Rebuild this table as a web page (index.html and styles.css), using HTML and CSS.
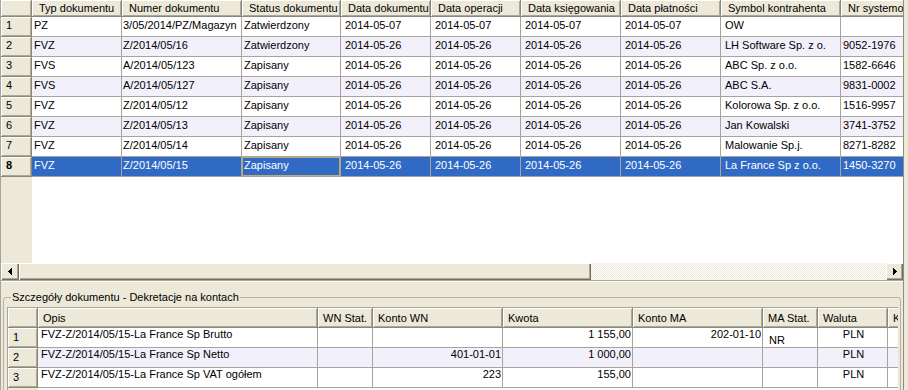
FILE: index.html
```html
<!DOCTYPE html>
<html lang="pl">
<head>
    <meta charset="UTF-8">
    <title>Dokumenty</title>
    <link rel="stylesheet" href="styles.css">
</head>
<body>

<div class="window">
    <!-- Lista dokumentow -->
    <div class="docs">
        <div class="grid doc-grid">
            <div class="row head">
                <div class="c ind"></div>
                <div class="c">Typ dokumentu</div>
                <div class="c">Numer dokumentu</div>
                <div class="c">Status dokumentu</div>
                <div class="c">Data dokumentu</div>
                <div class="c">Data operacji</div>
                <div class="c">Data księgowania</div>
                <div class="c">Data płatności</div>
                <div class="c">Symbol kontrahenta</div>
                <div class="c">Nr systemowy</div>
            </div>
            <div class="row">
                <div class="c ind">1</div>
                <div class="c">PZ</div>
                <div class="c">3/05/2014/PZ/Magazyn</div>
                <div class="c">Zatwierdzony</div>
                <div class="c">2014-05-07</div>
                <div class="c">2014-05-07</div>
                <div class="c">2014-05-07</div>
                <div class="c">2014-05-07</div>
                <div class="c">OW</div>
                <div class="c"></div>
            </div>
            <div class="row alt">
                <div class="c ind">2</div>
                <div class="c">FVZ</div>
                <div class="c">Z/2014/05/16</div>
                <div class="c">Zatwierdzony</div>
                <div class="c">2014-05-26</div>
                <div class="c">2014-05-26</div>
                <div class="c">2014-05-26</div>
                <div class="c">2014-05-26</div>
                <div class="c">LH Software Sp. z o.</div>
                <div class="c">9052-1976</div>
            </div>
            <div class="row">
                <div class="c ind">3</div>
                <div class="c">FVS</div>
                <div class="c">A/2014/05/123</div>
                <div class="c">Zapisany</div>
                <div class="c">2014-05-26</div>
                <div class="c">2014-05-26</div>
                <div class="c">2014-05-26</div>
                <div class="c">2014-05-26</div>
                <div class="c">ABC Sp. z o.o.</div>
                <div class="c">1582-6646</div>
            </div>
            <div class="row alt">
                <div class="c ind">4</div>
                <div class="c">FVS</div>
                <div class="c">A/2014/05/127</div>
                <div class="c">Zapisany</div>
                <div class="c">2014-05-26</div>
                <div class="c">2014-05-26</div>
                <div class="c">2014-05-26</div>
                <div class="c">2014-05-26</div>
                <div class="c">ABC S.A.</div>
                <div class="c">9831-0002</div>
            </div>
            <div class="row">
                <div class="c ind">5</div>
                <div class="c">FVZ</div>
                <div class="c">Z/2014/05/12</div>
                <div class="c">Zapisany</div>
                <div class="c">2014-05-26</div>
                <div class="c">2014-05-26</div>
                <div class="c">2014-05-26</div>
                <div class="c">2014-05-26</div>
                <div class="c">Kolorowa Sp. z o.o.</div>
                <div class="c">1516-9957</div>
            </div>
            <div class="row alt">
                <div class="c ind">6</div>
                <div class="c">FVZ</div>
                <div class="c">Z/2014/05/13</div>
                <div class="c">Zapisany</div>
                <div class="c">2014-05-26</div>
                <div class="c">2014-05-26</div>
                <div class="c">2014-05-26</div>
                <div class="c">2014-05-26</div>
                <div class="c">Jan Kowalski</div>
                <div class="c">3741-3752</div>
            </div>
            <div class="row">
                <div class="c ind">7</div>
                <div class="c">FVZ</div>
                <div class="c">Z/2014/05/14</div>
                <div class="c">Zapisany</div>
                <div class="c">2014-05-26</div>
                <div class="c">2014-05-26</div>
                <div class="c">2014-05-26</div>
                <div class="c">2014-05-26</div>
                <div class="c">Malowanie Sp.j.</div>
                <div class="c">8271-8282</div>
            </div>
            <div class="row sel">
                <div class="c ind">8</div>
                <div class="c">FVZ</div>
                <div class="c">Z/2014/05/15</div>
                <div class="c focus">Zapisany</div>
                <div class="c">2014-05-26</div>
                <div class="c">2014-05-26</div>
                <div class="c">2014-05-26</div>
                <div class="c">2014-05-26</div>
                <div class="c">La France Sp z o.o.</div>
                <div class="c">1450-3270</div>
            </div>
        </div>

        <div class="hscroll">
            <div class="sb-btn">
                <svg width="4" height="7" shape-rendering="crispEdges"><rect x="0" y="3" width="1" height="1"/><rect x="1" y="2" width="1" height="3"/><rect x="2" y="1" width="1" height="5"/><rect x="3" y="0" width="1" height="7"/></svg>
            </div>
            <div class="sb-thumb"></div>
            <div class="sb-track"></div>
            <div class="sb-btn">
                <svg width="4" height="7" shape-rendering="crispEdges"><rect x="0" y="0" width="1" height="7"/><rect x="1" y="1" width="1" height="5"/><rect x="2" y="2" width="1" height="3"/><rect x="3" y="3" width="1" height="1"/></svg>
            </div>
        </div>
    </div>

    <!-- Dekretacje -->
    <div class="details">
        <fieldset class="group">
            <legend>Szczegóły dokumentu - Dekretacje na kontach</legend>
            <div class="grid post-grid">
                <div class="row head">
                    <div class="c ind"></div>
                    <div class="c">Opis</div>
                    <div class="c">WN Stat.</div>
                    <div class="c">Konto WN</div>
                    <div class="c">Kwota</div>
                    <div class="c">Konto MA</div>
                    <div class="c">MA Stat.</div>
                    <div class="c">Waluta</div>
                    <div class="c">Kurs</div>
                </div>
                <div class="row">
                    <div class="c ind">1</div>
                    <div class="c">FVZ-Z/2014/05/15-La France Sp Brutto</div>
                    <div class="c"></div>
                    <div class="c num"></div>
                    <div class="c num">1 155,00</div>
                    <div class="c num">202-01-10</div>
                    <div class="c stat">NR</div>
                    <div class="c mid">PLN</div>
                    <div class="c"></div>
                </div>
                <div class="row alt">
                    <div class="c ind">2</div>
                    <div class="c">FVZ-Z/2014/05/15-La France Sp Netto</div>
                    <div class="c"></div>
                    <div class="c num">401-01-01</div>
                    <div class="c num">1 000,00</div>
                    <div class="c num"></div>
                    <div class="c stat"></div>
                    <div class="c mid">PLN</div>
                    <div class="c"></div>
                </div>
                <div class="row">
                    <div class="c ind">3</div>
                    <div class="c">FVZ-Z/2014/05/15-La France Sp VAT ogółem</div>
                    <div class="c"></div>
                    <div class="c num">223</div>
                    <div class="c num">155,00</div>
                    <div class="c num"></div>
                    <div class="c stat"></div>
                    <div class="c mid">PLN</div>
                    <div class="c"></div>
                </div>
            </div>
        </fieldset>
    </div>
</div>

</body>
</html>
```

FILE: styles.css
```css
* {
    box-sizing: border-box;
}

body {
    margin: 0;
    background-color: #ece9d8;
    font-family: "Liberation Sans", Arial, sans-serif;
    font-size: 11px;
    color: #000;
    overflow: hidden;
}

.window {
    width: 904px;
    height: 390px;
    border-left: 1px solid #a6a49c;
    border-right: 1px solid #8e8c84;
    display: flex;
    flex-direction: column;
    overflow: hidden;
}

/* grids */
.row {
    display: flex;
}

.c {
    flex: none;
    height: 20px;
    padding: 2px 2px 0;
    line-height: 13px;
    white-space: nowrap;
    overflow: hidden;
    border-right: 1px solid #a6a49c;
    border-bottom: 1px solid #a6a49c;
}

.head .c,
.c.ind {
    background-color: #ece9d8;
    box-shadow: inset 1px 1px #fff, inset -1px -1px #aca899;
    border-color: #8a877b;
}

.alt .c {
    background-color: #f2f0fb;
}

.alt .c.ind {
    background-color: #ece9d8;
}

.sel .c {
    background-color: #316ac5;
    color: #fff;
}

.sel .c.ind {
    background-color: #ece9d8;
    color: #000;
    font-weight: bold;
}

.sel .c.focus {
    box-shadow: inset 0 0 0 1px #c2ab6e;
}

/* dokumenty */
.docs {
    border-bottom: 1px solid #aca899;
}

.doc-grid {
    height: 263px;
    overflow: hidden;
    background: linear-gradient(to right, #ece9d8 31px, #fff 31px);
}

.doc-grid .c.ind {
    padding-left: 5px;
}

.doc-grid .c:nth-child(1) { width: 31px; }
.doc-grid .c:nth-child(2) { width: 90px; }
.doc-grid .c:nth-child(3) { width: 120px; padding-left: 1px; }
.doc-grid .c:nth-child(4) { width: 99px; }
.doc-grid .c:nth-child(5) { width: 90px; padding-left: 4px; }
.doc-grid .c:nth-child(6) { width: 90px; padding-left: 4px; }
.doc-grid .c:nth-child(7) { width: 100px; padding-left: 4px; }
.doc-grid .c:nth-child(8) { width: 100px; padding-left: 4px; }
.doc-grid .c:nth-child(9) { width: 120px; padding-left: 4px; }
.doc-grid .c:nth-child(10) { width: 100px; }

.doc-grid .head .c:nth-child(n) {
    height: 17px;
    padding: 2px 4px 0 7px;
}

/* pasek przewijania */
.hscroll {
    display: flex;
    height: 17px;
}

.sb-btn {
    flex: none;
    width: 17px;
    display: flex;
    align-items: center;
    justify-content: center;
    background-color: #ece9d8;
    box-shadow: inset 1px 1px #fff, inset -1px -1px #716f64, inset -2px -2px #aca899;
}

.sb-btn:first-child {
    width: 18px;
}

.sb-thumb {
    flex: none;
    width: 572px;
    background-color: #ece9d8;
    box-shadow: inset 1px 1px #fff, inset -1px -1px #716f64, inset -2px -2px #aca899;
}

.sb-track {
    flex: 1;
    background: repeating-conic-gradient(#fff 0 25%, #ece9d8 0 50%) 0 0 / 2px 2px;
}

/* dekretacje */
.details {
    flex: 1;
    border-top: 1px solid #fff;
    padding: 9px 2px 0 2px;
}

.group {
    margin: 0;
    height: 120px;
    min-width: 0;
    padding: 3px 2px 0 3px;
    border: 1px solid #b5b2a3;
    border-radius: 3px;
}

.group legend {
    margin-left: 4px;
    padding: 0 1px;
    line-height: 13px;
}

.post-grid {
    height: 100px;
    overflow: hidden;
    border-left: 1px solid #a6a49c;
    border-top: 1px solid #a6a49c;
    background: linear-gradient(to right, #ece9d8 30px, #fff 30px);
}

.post-grid .c {
    padding: 0 1px 0 3px;
}

.post-grid .c.num {
    text-align: right;
    padding-right: 1px;
}

.post-grid .c.mid {
    text-align: center;
}

.post-grid .c.stat {
    padding: 6px 0 0 6px;
}

.post-grid .c.ind {
    padding: 3px 0 0 5px;
}

.post-grid .head .c:nth-child(n) {
    padding: 4px 2px 0 5px;
}

.post-grid .c:nth-child(1) { width: 30px; }
.post-grid .c:nth-child(2) { width: 280px; }
.post-grid .c:nth-child(3) { width: 55px; }
.post-grid .c:nth-child(4) { width: 130px; }
.post-grid .c:nth-child(5) { width: 130px; }
.post-grid .c:nth-child(6) { width: 130px; }
.post-grid .c:nth-child(7) { width: 55px; }
.post-grid .c:nth-child(8) { width: 70px; }
.post-grid .c:nth-child(9) { width: 60px; }
```
